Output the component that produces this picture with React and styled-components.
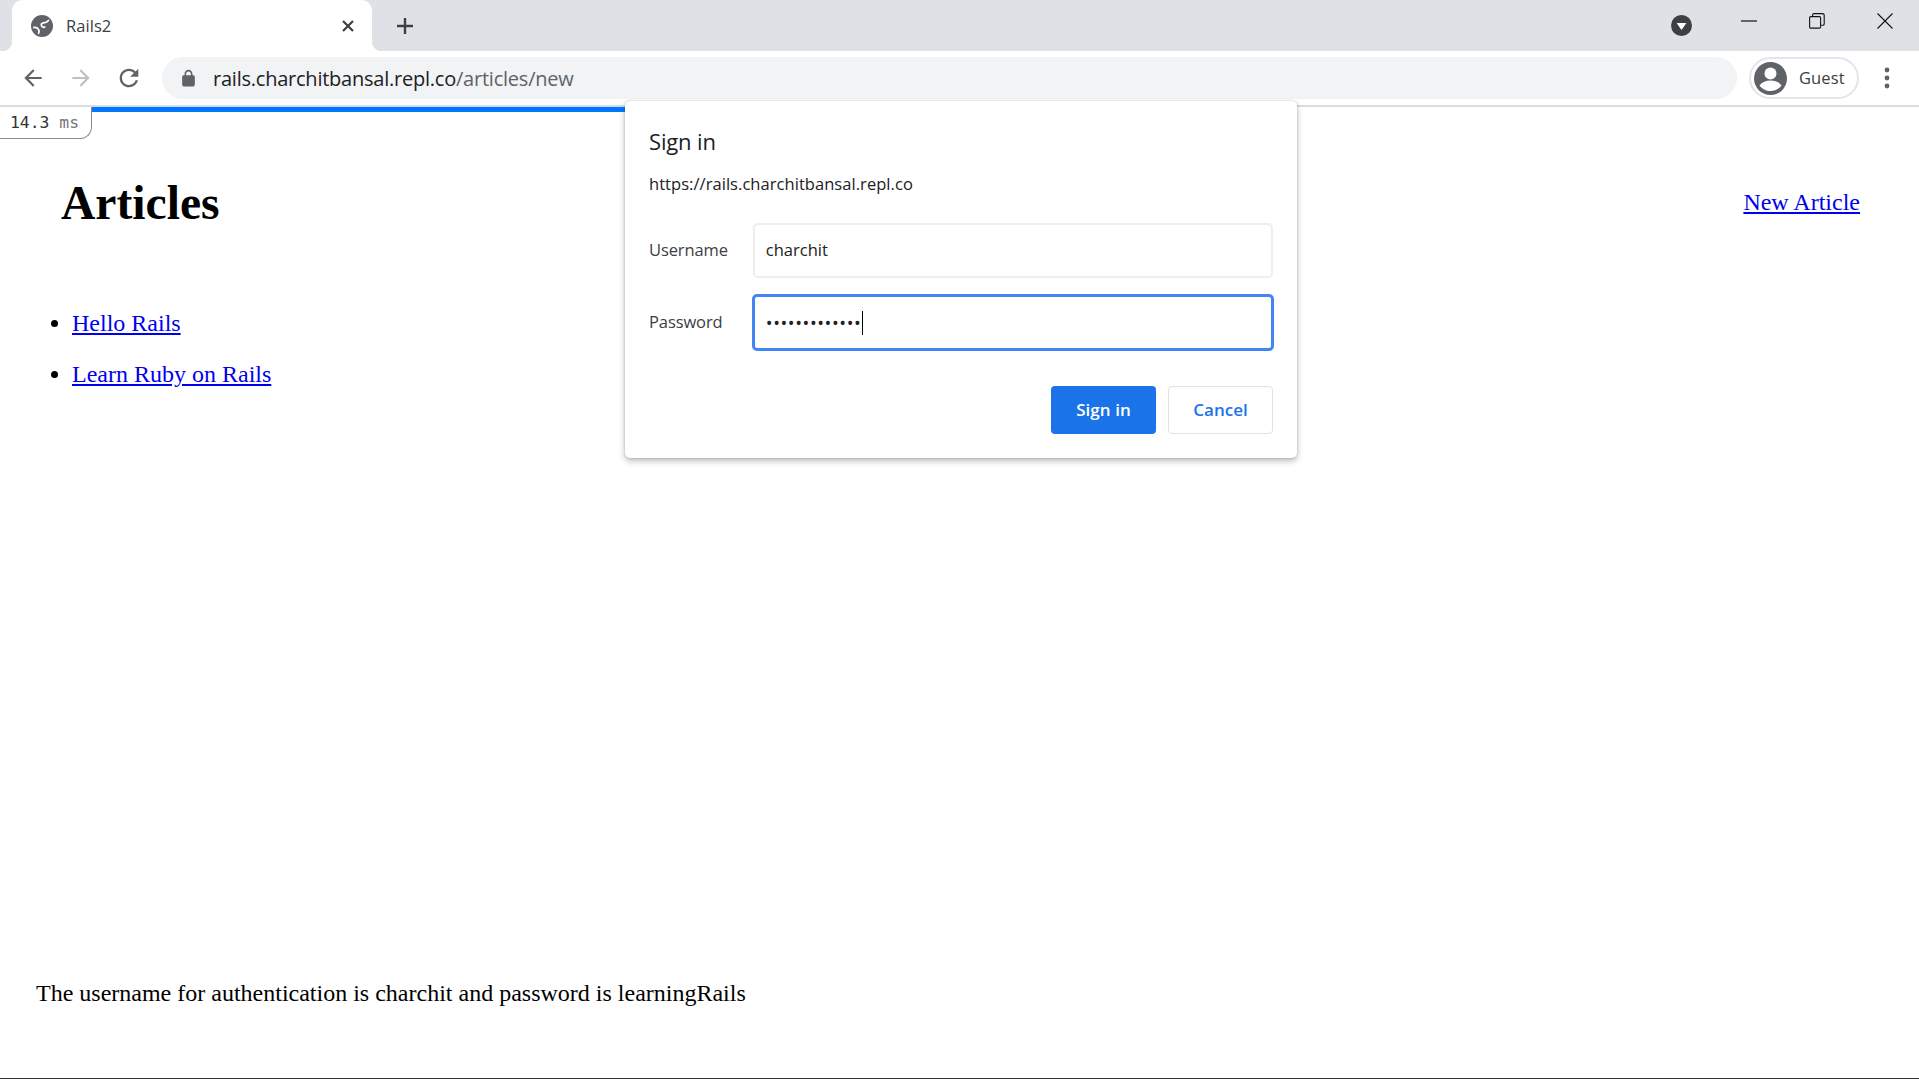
import React from "react";
import styled, { createGlobalStyle } from "styled-components";

const Global = createGlobalStyle`
  html, body { margin: 0; padding: 0; background: #fff; }
  #root { width: 1919px; height: 1079px; overflow: hidden; }
`;
const UI = `"Open Sans", "Noto Sans", Arial, sans-serif`;

const Window = styled.div`
  position: relative; width: 1919px; height: 1079px;
  display: flex; flex-direction: column; background: #fff;
  font-family: "Liberation Serif", serif; color: #000;
`;
const TabStrip = styled.div`
  height: 51px; flex: none; display: flex; align-items: stretch;
  background: #dee1e6; padding-left: 12px; font-family: ${UI};
`;
const Tab = styled.div`
  position: relative; width: 360px; background: #fff; border-radius: 11px 11px 0 0;
  display: flex; align-items: center; padding: 0 17px 0 19px; box-sizing: border-box;
  &::before, &::after { content: ""; position: absolute; bottom: 0; width: 10px; height: 10px; }
  &::before { left: -10px; background: radial-gradient(circle at 0 0, transparent 10px, #fff 10.5px); }
  &::after { right: -10px; background: radial-gradient(circle at 100% 0, transparent 10px, #fff 10.5px); }
`;
const TabTitle = styled.span`
  margin-left: 13px; flex: 1; font-size: 16.5px; letter-spacing: 0.05px; color: #3c4043;
`;
const NewTab = styled.div`
  width: 24px; height: 51px; margin-left: 21px; display: flex; align-items: center; justify-content: center;
`;
const Spacer = styled.div`flex: 1;`;
const Indicator = styled.div`
  width: 21px; height: 51px; margin-right: 23px; display: flex; align-items: center;
`;
const WinButton = styled.div`
  width: 68px; height: 42px; display: flex; align-items: center; justify-content: center;
`;
const Toolbar = styled.div`
  height: 54px; flex: none; display: flex; align-items: center; background: #fff;
  border-bottom: 2px solid #dadce0; padding-left: 9px; font-family: ${UI};
`;
const NavButton = styled.div`
  width: 48px; height: 42px; flex: none; display: flex; align-items: center; justify-content: center;
`;
const Omnibox = styled.div`
  flex: none; width: 1575px; height: 42px; margin-left: 9px; border-radius: 21px; background: #f1f3f4;
  display: flex; align-items: center; padding-left: 17px; box-sizing: border-box;
`;
const UrlText = styled.span`
  margin-left: 15px; font-size: 20px; letter-spacing: -0.23px; color: #202124;
  white-space: nowrap;
`;
const UrlPath = styled.span`color: #5f6368;`;
const GuestPill = styled.div`
  flex: none; width: 110px; height: 42px; margin-left: 12px; box-sizing: border-box;
  border: 2px solid #e3e5e8; border-radius: 21px; display: flex; align-items: center; padding-left: 3px;
`;
const GuestLabel = styled.span`
  margin: -2px 0 0 12px; font-size: 16.5px; letter-spacing: 0.1px; color: #3c4043;
`;
const MenuButton = styled.div`
  width: 40px; height: 42px; margin-left: 8px; display: flex; align-items: center; justify-content: center;
`;
const Page = styled.main`
  position: relative; flex: 1; display: flex; flex-direction: column;
  border-bottom: 1px solid #333;
`;
const ProgressBar = styled.div`
  position: absolute; top: 0; left: 0; height: 5px; width: 640px; background: #0076ff;
`;
const TimingBadge = styled.div`
  position: absolute; top: 0; left: 0; width: 92px; height: 32px; box-sizing: border-box;
  background: #fff; border: 1px solid #8a8a8a; border-width: 0 1px 1px 0; border-bottom-right-radius: 12px;
  font-family: "DejaVu Sans Mono", "Liberation Mono", monospace; font-size: 16.4px; line-height: 32px;
  padding-left: 10px; color: #333; white-space: nowrap;
`;
const TimingUnit = styled.span`color: #777;`;
const Header = styled.header`
  display: flex; align-items: center; justify-content: space-between; padding: 69px 59px 0 61px;
`;
const Title = styled.h1`margin: 0; font-size: 47.6px; font-weight: 700; line-height: 55px;`;
const PageLink = styled.a`color: #0000ee; text-decoration: underline; font-size: 24px;`;
const NewLink = styled(PageLink)`margin-bottom: 2px;`;
const ArticleList = styled.ul`margin: 79px 0 0; padding-left: 72px;`;
const ArticleItem = styled.li`font-size: 24px; line-height: 27px; margin-bottom: 24px;`;
const Note = styled.p`margin: auto 0 71px 36px; font-size: 24px; line-height: 27px;`;

const Dialog = styled.div`
  position: absolute; left: 625px; top: 101px; width: 672px; height: 357px; box-sizing: border-box;
  background: #fff; border-radius: 5px; padding: 0 24px 24px;
  box-shadow: 0 0 2px rgba(60,64,67,.3), 0 3px 6px rgba(60,64,67,.35);
  display: flex; flex-direction: column; font-family: ${UI}; color: #202124;
`;
const DialogTitle = styled.div`
  font-size: 22px; letter-spacing: -0.15px; line-height: 28px; margin-top: 26px;
`;
const Origin = styled.div`
  font-size: 16.5px; letter-spacing: 0.05px; line-height: 24px; margin-top: 17px;
`;
const FieldRow = styled.div`
  display: flex; align-items: center; margin-top: ${p => p.$top}px;
`;
const FieldLabel = styled.div`
  width: 104px; padding-bottom: 2px; font-size: 16.5px; letter-spacing: -0.1px; color: #3c4043;
`;
const Field = styled.div`
  height: ${p => (p.$focused ? 57 : 55)}px; box-sizing: border-box; border-radius: 5px;
  margin: 0 ${p => (p.$focused ? -1 : 0)}px 0 ${p => (p.$focused ? -1 : 0)}px;
  width: ${p => (p.$focused ? 523 : 521)}px;
  border: ${p => (p.$focused ? "3px solid #4285f4" : "2px solid #eceef0")};
  padding: 0 0 2px 11px;
  display: flex; align-items: center; font-size: 16.5px; letter-spacing: 0; color: #202124;
`;
const Dots = styled.span`font-size: 18px; letter-spacing: 0.58px; line-height: 1; padding-top: 2px;`;
const Caret = styled.span`display: inline-block; width: 1px; height: 24px; margin: 2px 0 0 1px; background: #000;`;
const Actions = styled.div`
  display: flex; justify-content: flex-end; gap: 12px; margin-top: auto;
`;
const Button = styled.div`
  width: ${p => p.$w}px; height: 48px; box-sizing: border-box; border-radius: 4px; padding-bottom: 2px;
  display: flex; align-items: center; justify-content: center;
  font-size: 17px; font-weight: 600; letter-spacing: 0.05px;
  background: ${p => (p.$primary ? "#1a73e8" : "#fff")};
  color: ${p => (p.$primary ? "#fff" : "#1a73e8")};
  border: ${p => (p.$primary ? "none" : "1.5px solid #dfe1e5")};
`;

const Icon = ({ size = 24, d, fill = "#5f6368" }) => (
  <svg width={size} height={size} viewBox="0 0 24 24" fill={fill}><path d={d} /></svg>
);
const BACK = "M20 11H7.83l5.59-5.59L12 4l-8 8 8 8 1.41-1.41L7.83 13H20v-2z";
const FORWARD = "M4 11h12.17l-5.59-5.59L12 4l8 8-8 8-1.41-1.41L16.17 13H4v-2z";
const RELOAD = "M17.65 6.35C16.2 4.9 14.21 4 12 4c-4.42 0-7.99 3.58-7.99 8s3.57 8 7.99 8c3.73 0 6.84-2.55 7.73-6h-2.08c-.82 2.33-3.04 4-5.65 4-3.31 0-6-2.69-6-6s2.69-6 6-6c1.66 0 3.14.69 4.22 1.78L13 11h7V4l-2.35 2.35z";
const LOCK = "M18 8h-1V6c0-2.76-2.24-5-5-5S7 3.24 7 6v2H6c-1.1 0-2 .9-2 2v10c0 1.1.9 2 2 2h12c1.1 0 2-.9 2-2V10c0-1.1-.9-2-2-2zM9 6c0-1.66 1.34-3 3-3s3 1.34 3 3v2H9V6z";

const Globe = () => (
  <svg width="22" height="22" viewBox="0 0 22 22" fill="none">
    <circle cx="11" cy="11" r="11" fill="#5f6368" />
    <path d="M17.5 5.5c-1.6 2-3.4 2.3-5 2.4-1.8.2-2.6 1.4-2 2.8.5 1.3 2 1.7 3.2 1.5" stroke="#fff" strokeWidth="1.8" strokeLinecap="round" />
    <path d="M3 12.5c1.8-.4 3.4.4 4.4 1.8.9 1.2.9 2.8.2 4" stroke="#fff" strokeWidth="1.8" strokeLinecap="round" />
  </svg>
);

const Avatar = () => (
  <svg width="33" height="33" viewBox="0 0 33 33">
    <circle cx="16.5" cy="16.5" r="16.5" fill="#5f6368" />
    <circle cx="16.5" cy="11.5" r="6" fill="#fff" />
    <path d="M5.5 23.5c2.4-3.4 6.6-5 11-5s8.6 1.6 11 5c-2.4 3.4-6.6 5.6-11 5.6s-8.6-2.2-11-5.6z" fill="#fff" />
  </svg>
);

export default function App() {
  return (
    <Window>
      <Global />
      <TabStrip>
        <Tab>
          <Globe />
          <TabTitle>Rails2</TabTitle>
          <svg width="14" height="14" viewBox="0 0 14 14" stroke="#3c4043" strokeWidth="2.2"><path d="M2 2l10 10M12 2L2 12" /></svg>
        </Tab>
        <NewTab>
          <svg width="18" height="18" viewBox="0 0 18 18" stroke="#3c4043" strokeWidth="2.4"><path d="M9 1v16M1 9h16" /></svg>
        </NewTab>
        <Spacer />
        <Indicator>
          <svg width="21" height="21" viewBox="0 0 21 21">
            <circle cx="10.5" cy="10.5" r="10.5" fill="#3c4043" />
            <path d="M5.6 8h9.8l-4.9 7z" fill="#fff" />
          </svg>
        </Indicator>
        <WinButton>
          <svg width="16" height="2" viewBox="0 0 16 2"><path d="M0 1h16" stroke="#111" strokeWidth="1.2" /></svg>
        </WinButton>
        <WinButton>
          <svg width="16" height="16" viewBox="0 0 16 16" fill="none" stroke="#111" strokeWidth="1.1">
            <rect x=".6" y="3.6" width="11" height="11.5" rx="1.2" />
            <path d="M3.6 3.5V2c0-.8.5-1.4 1.3-1.4h8.6c1 0 1.7.7 1.7 1.7v8.6c0 .8-.6 1.3-1.4 1.3h-1.6" />
          </svg>
        </WinButton>
        <WinButton>
          <svg width="16" height="16" viewBox="0 0 16 16" stroke="#111" strokeWidth="1.1"><path d="M.5.5l15 15M15.5.5l-15 15" /></svg>
        </WinButton>
      </TabStrip>
      <Toolbar>
        <NavButton><Icon size={26} d={BACK} /></NavButton>
        <NavButton><Icon size={26} d={FORWARD} fill="#bdc1c6" /></NavButton>
        <NavButton><Icon size={28} d={RELOAD} /></NavButton>
        <Omnibox>
          <Icon size={19} d={LOCK} />
          <UrlText>rails.charchitbansal.repl.co<UrlPath>/articles/new</UrlPath></UrlText>
        </Omnibox>
        <GuestPill>
          <Avatar />
          <GuestLabel>Guest</GuestLabel>
        </GuestPill>
        <MenuButton>
          <svg width="6" height="22" viewBox="0 0 6 22" fill="#5f6368">
            <circle cx="3" cy="3" r="2.4" /><circle cx="3" cy="11" r="2.4" /><circle cx="3" cy="19" r="2.4" />
          </svg>
        </MenuButton>
      </Toolbar>
      <Page>
        <ProgressBar />
        <TimingBadge>14.3 <TimingUnit>ms</TimingUnit></TimingBadge>
        <Header>
          <Title>Articles</Title>
          <NewLink href="#">New Article</NewLink>
        </Header>
        <ArticleList>
          <ArticleItem><PageLink href="#">Hello Rails</PageLink></ArticleItem>
          <ArticleItem><PageLink href="#">Learn Ruby on Rails</PageLink></ArticleItem>
        </ArticleList>
        <Note>The username for authentication is charchit and password is learningRails</Note>
      </Page>
      <Dialog>
        <DialogTitle>Sign in</DialogTitle>
        <Origin>https://rails.charchitbansal.repl.co</Origin>
        <FieldRow $top={27}>
          <FieldLabel>Username</FieldLabel>
          <Field>charchit</Field>
        </FieldRow>
        <FieldRow $top={16}>
          <FieldLabel>Password</FieldLabel>
          <Field $focused><Dots>•••••••••••••</Dots><Caret /></Field>
        </FieldRow>
        <Actions>
          <Button $primary $w={105}>Sign in</Button>
          <Button $w={105}>Cancel</Button>
        </Actions>
      </Dialog>
    </Window>
  );
}
